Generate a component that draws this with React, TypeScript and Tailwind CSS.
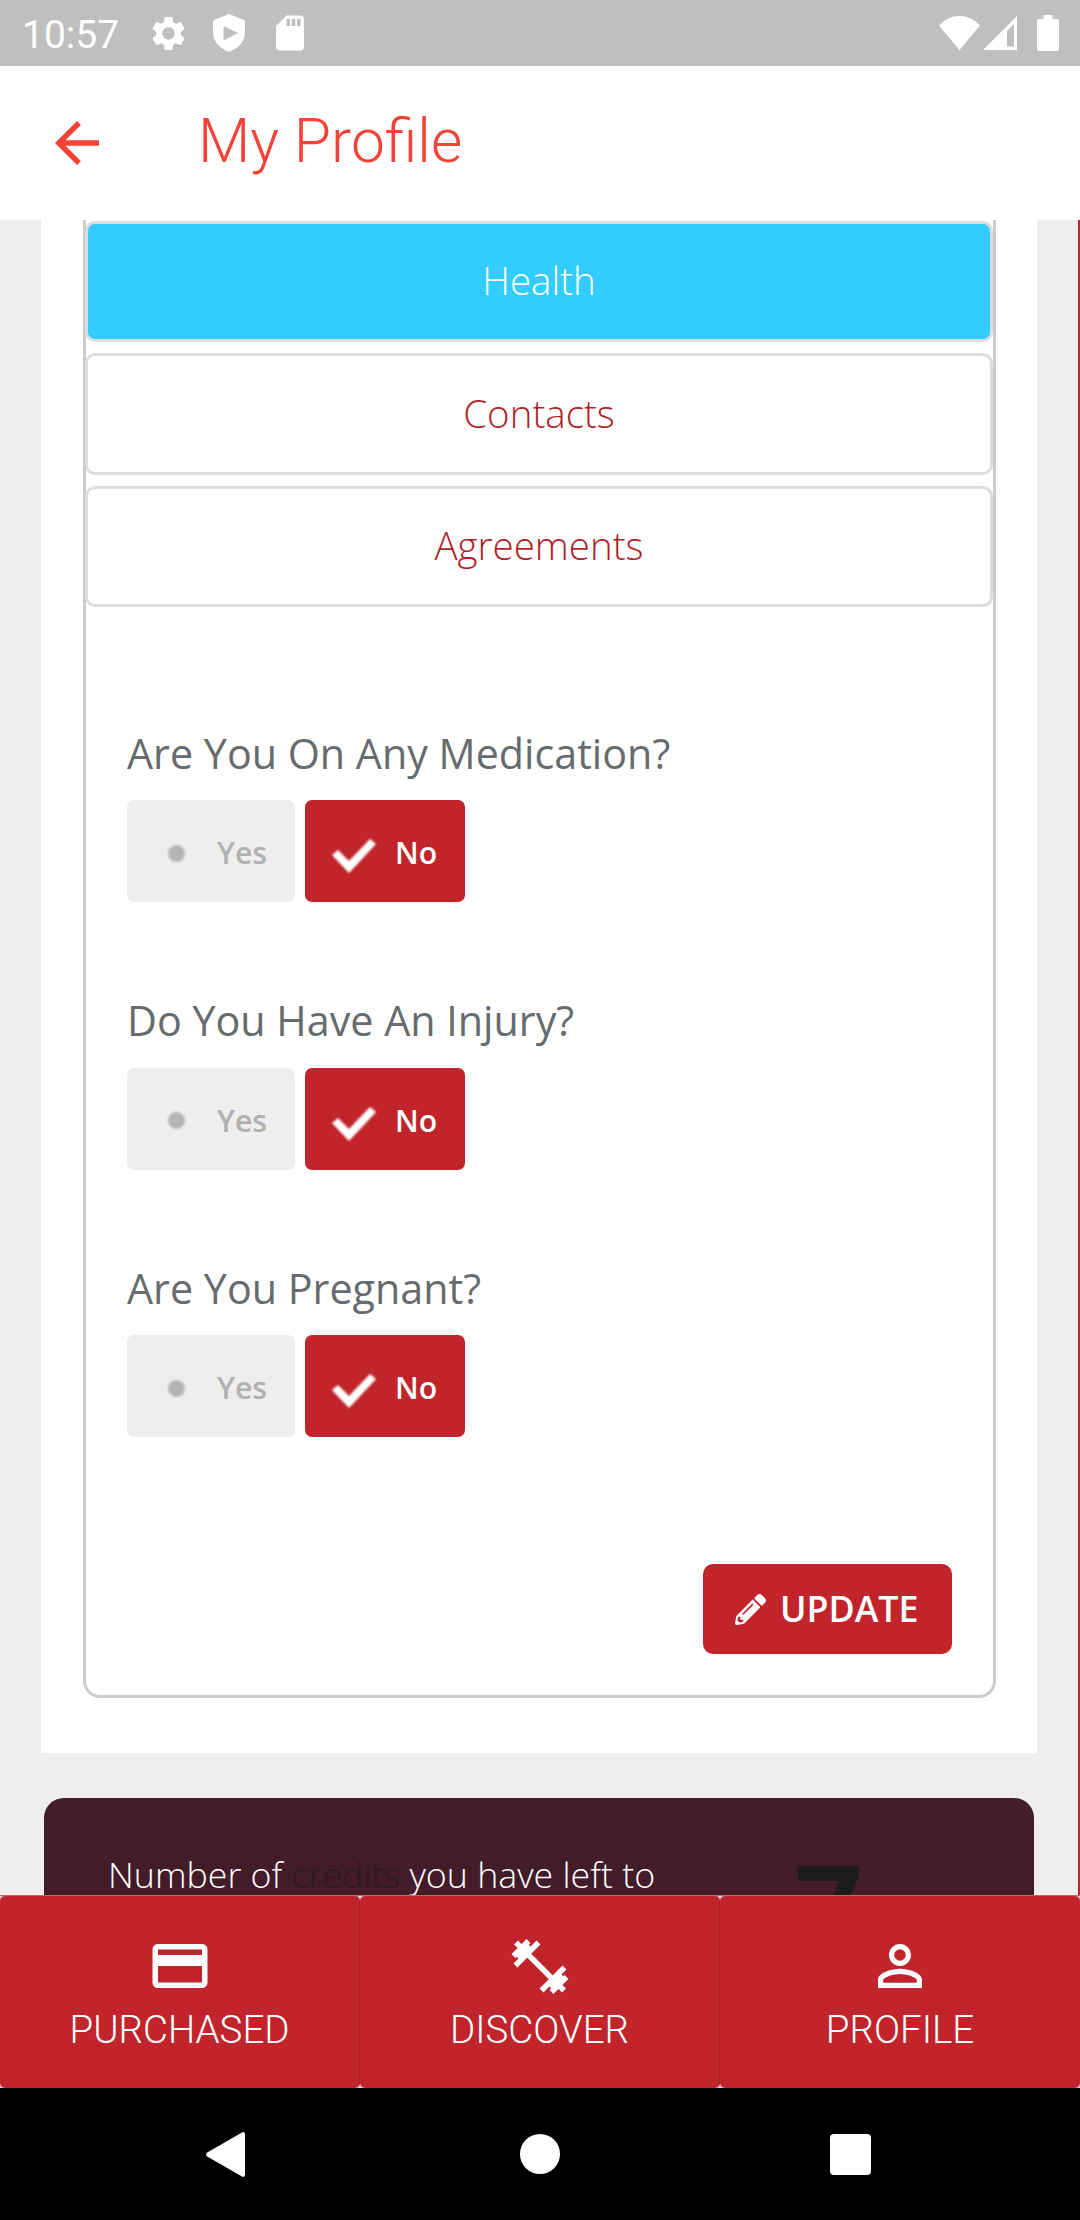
import { MdArrowBack, MdOutlineCreditCard, MdPersonOutline, MdSettings, MdSdCard } from "react-icons/md";
import { FaPencilAlt } from "react-icons/fa";

const tabs = [
  { label: "Health", active: true },
  { label: "Contacts", active: false },
  { label: "Agreements", active: false },
];

const questions = [
  "Are You On Any Medication?",
  "Do You Have An Injury?",
  "Are You Pregnant?",
];

function StatusBar() {
  return (
    <div className="flex h-[66px] shrink-0 items-center bg-[#bfbfbf] text-white">
      <span className="ml-[22px] w-[126px] pt-1 text-[39px] leading-none">10:57</span>
      <MdSettings className="h-[41px] w-[41px]" />
      <svg viewBox="0 0 32 38" className="ml-6 h-[38px] w-8" fill="currentColor">
        <path
          fillRule="evenodd"
          d="M16 0 1 6q-1 .5-1 2v10c0 9 6 16 16 20 10-4 16-11 16-20V8q0-1.500-1-2zM10.500 12v14.500L25 19z"
        />
      </svg>
      <MdSdCard className="ml-[24px] h-[42px] w-[42px]" />
      <svg viewBox="0 0 41 34" className="ml-auto h-[34px] w-[41px]" fill="currentColor">
        <path d="M0 9.500Q8.500 0 20.500 0T41 9.500L20.500 34z" />
      </svg>
      <svg viewBox="0 0 34 34" className="ml-[3px] h-[34px] w-[34px]" fill="currentColor">
        <path fillRule="evenodd" d="M34 0v34H0zM31 8l-7 7v15.500h7z" />
      </svg>
      <svg viewBox="0 0 22 36" className="mr-[21px] ml-5 h-9 w-[22px]" fill="currentColor">
        <path d="M6.500 0h9v4H20a2 2 0 0 1 2 2v28a2 2 0 0 1-2 2H2a2 2 0 0 1-2-2V6a2 2 0 0 1 2-2h4.500z" />
      </svg>
    </div>
  );
}

function YesNo() {
  return (
    <div className="flex h-[102px] gap-[10px] text-[30.25px] font-semibold">
      <div className="flex w-[168px] items-center rounded-[7px] bg-[#eee] pl-[41px] text-[#b1b1b1]">
        <span className="mt-1 h-[17px] w-[17px] rounded-full bg-[#b5b5b5] blur-[1px]" />
        <span className="mt-1 ml-8">Yes</span>
      </div>
      <div className="flex w-[160px] items-center rounded-[7px] bg-[#c1242b] pl-[27px] text-white">
        <svg viewBox="0 0 44 34" className="mt-2.5 h-[34px] w-[44px] blur-[1px]" fill="currentColor">
          <path d="M0 16 6 11l11 11L38 0l6 5-27 29z" />
        </svg>
        <span className="mt-1 ml-[19px]">No</span>
      </div>
    </div>
  );
}

const DumbbellIcon = () => (
  <svg viewBox="0 0 66 66" className="h-[66px] w-[66px]" fill="none" stroke="currentColor" strokeWidth="5.500">
    <path d="M9 9.500 57 57.500" />
    <path d="M8.500 32.500 31.500 9.500M6.500 23 21.500 8" />
    <path d="M10.500 24.500 22.500 12.500" />
    <path d="M34.500 57.500 57.500 34.500M44.500 59 59.500 44" />
    <path d="M43.500 54.500 55.500 42.500" />
  </svg>
);

const navItems = [
  { label: "PURCHASED", icon: <MdOutlineCreditCard className="h-[66px] w-[66px]" /> },
  { label: "DISCOVER", icon: <DumbbellIcon /> },
  { label: "PROFILE", icon: <MdPersonOutline className="h-[66px] w-[66px]" /> },
];

export default function App() {
  return (
    <div className="flex h-[2220px] w-[1080px] flex-col overflow-hidden bg-white font-[Roboto,sans-serif]">
      <StatusBar />
      <header className="flex h-[154px] shrink-0 items-center text-[#f44336]">
        <MdArrowBack className="ml-11 h-[66px] w-[66px]" />
        <h1 className="ml-[88px] pb-0.5 text-[60.5px] leading-none font-light">My Profile</h1>
      </header>

      <main className="h-[1675px] shrink-0 overflow-hidden border-r-2 border-[#c1242b] bg-[#eee] font-['Open_Sans',sans-serif]">
        <section className="ml-[41px] h-[1533px] w-[996px] bg-white pr-[41px] pl-[42px]">
          <div className="flex h-[1478px] flex-col rounded-b-[17px] border-3 border-t-0 border-[#ccc] pt-px">
            <div className="-ml-px flex flex-col gap-[11px]">
              {tabs.map((tab) => (
                <button
                  key={tab.label}
                  className={
                    "h-[121.4px] rounded-[10px] border-3 border-[#ddd] pb-px text-[38.5px] font-light " +
                    (tab.active ? "bg-[#3cf] text-white" : "bg-white text-[#b11f2b]")
                  }
                >
                  {tab.label}
                </button>
              ))}
            </div>
            <div className="mt-[117.5px] flex flex-col gap-[90px] px-[41px]">
              {questions.map((q) => (
                <div key={q}>
                  <p className="mb-[19.5px] h-[56px] text-[41.25px] leading-[56px] text-[#666b6e]">{q}</p>
                  <YesNo />
                </div>
              ))}
            </div>
            <button className="mt-auto mr-[41px] mb-[41px] flex h-[90px] w-[249px] items-center self-end rounded-[10px] bg-[#c1242b] pl-8 text-[35.75px] font-semibold text-white">
              <FaPencilAlt className="h-[31px] w-[31px]" />
              <span className="ml-[14px]">UPDATE</span>
            </button>
          </div>
        </section>

        <section className="mt-[45px] ml-11 flex h-[240px] w-[990px] rounded-[20px] bg-[#421c28] pl-16">
          <p className="mt-[50px] w-[687px] text-[35.75px] font-light text-white">
            Number of <span className="text-[#2b1a20]">credits</span> you have left to
          </p>
          <span className="mt-[49px] text-[118px] leading-none font-bold text-[#1c1c1c]">7</span>
        </section>
      </main>

      <nav className="grid h-[193px] shrink-0 grid-cols-3 border-t border-[#b07070] bg-[#f4d0cc]">
        {navItems.map((item) => (
          <button
            key={item.label}
            className="flex flex-col items-center rounded-[5px] border-r border-[#ad2026] bg-[#c1242b] pt-[37px] text-white last:border-r-0"
          >
            {item.icon}
            <span className="mt-3 text-[38.5px] leading-none font-light">{item.label}</span>
          </button>
        ))}
      </nav>

      <div className="flex h-[132px] shrink-0 items-center bg-black text-white">
        <svg viewBox="0 0 39 45" className="ml-[206px] h-[45px] w-[39px]" fill="currentColor">
          <path d="M36 .4q3-1.200 3 2v40.200q0 3.200-3 2L1.200 24.500q-2.200-2 0-4z" />
        </svg>
        <div className="ml-[275px] h-10 w-10 rounded-full bg-white" />
        <div className="ml-[270px] h-[41px] w-[41px] rounded-[4px] bg-white" />
      </div>
    </div>
  );
}
